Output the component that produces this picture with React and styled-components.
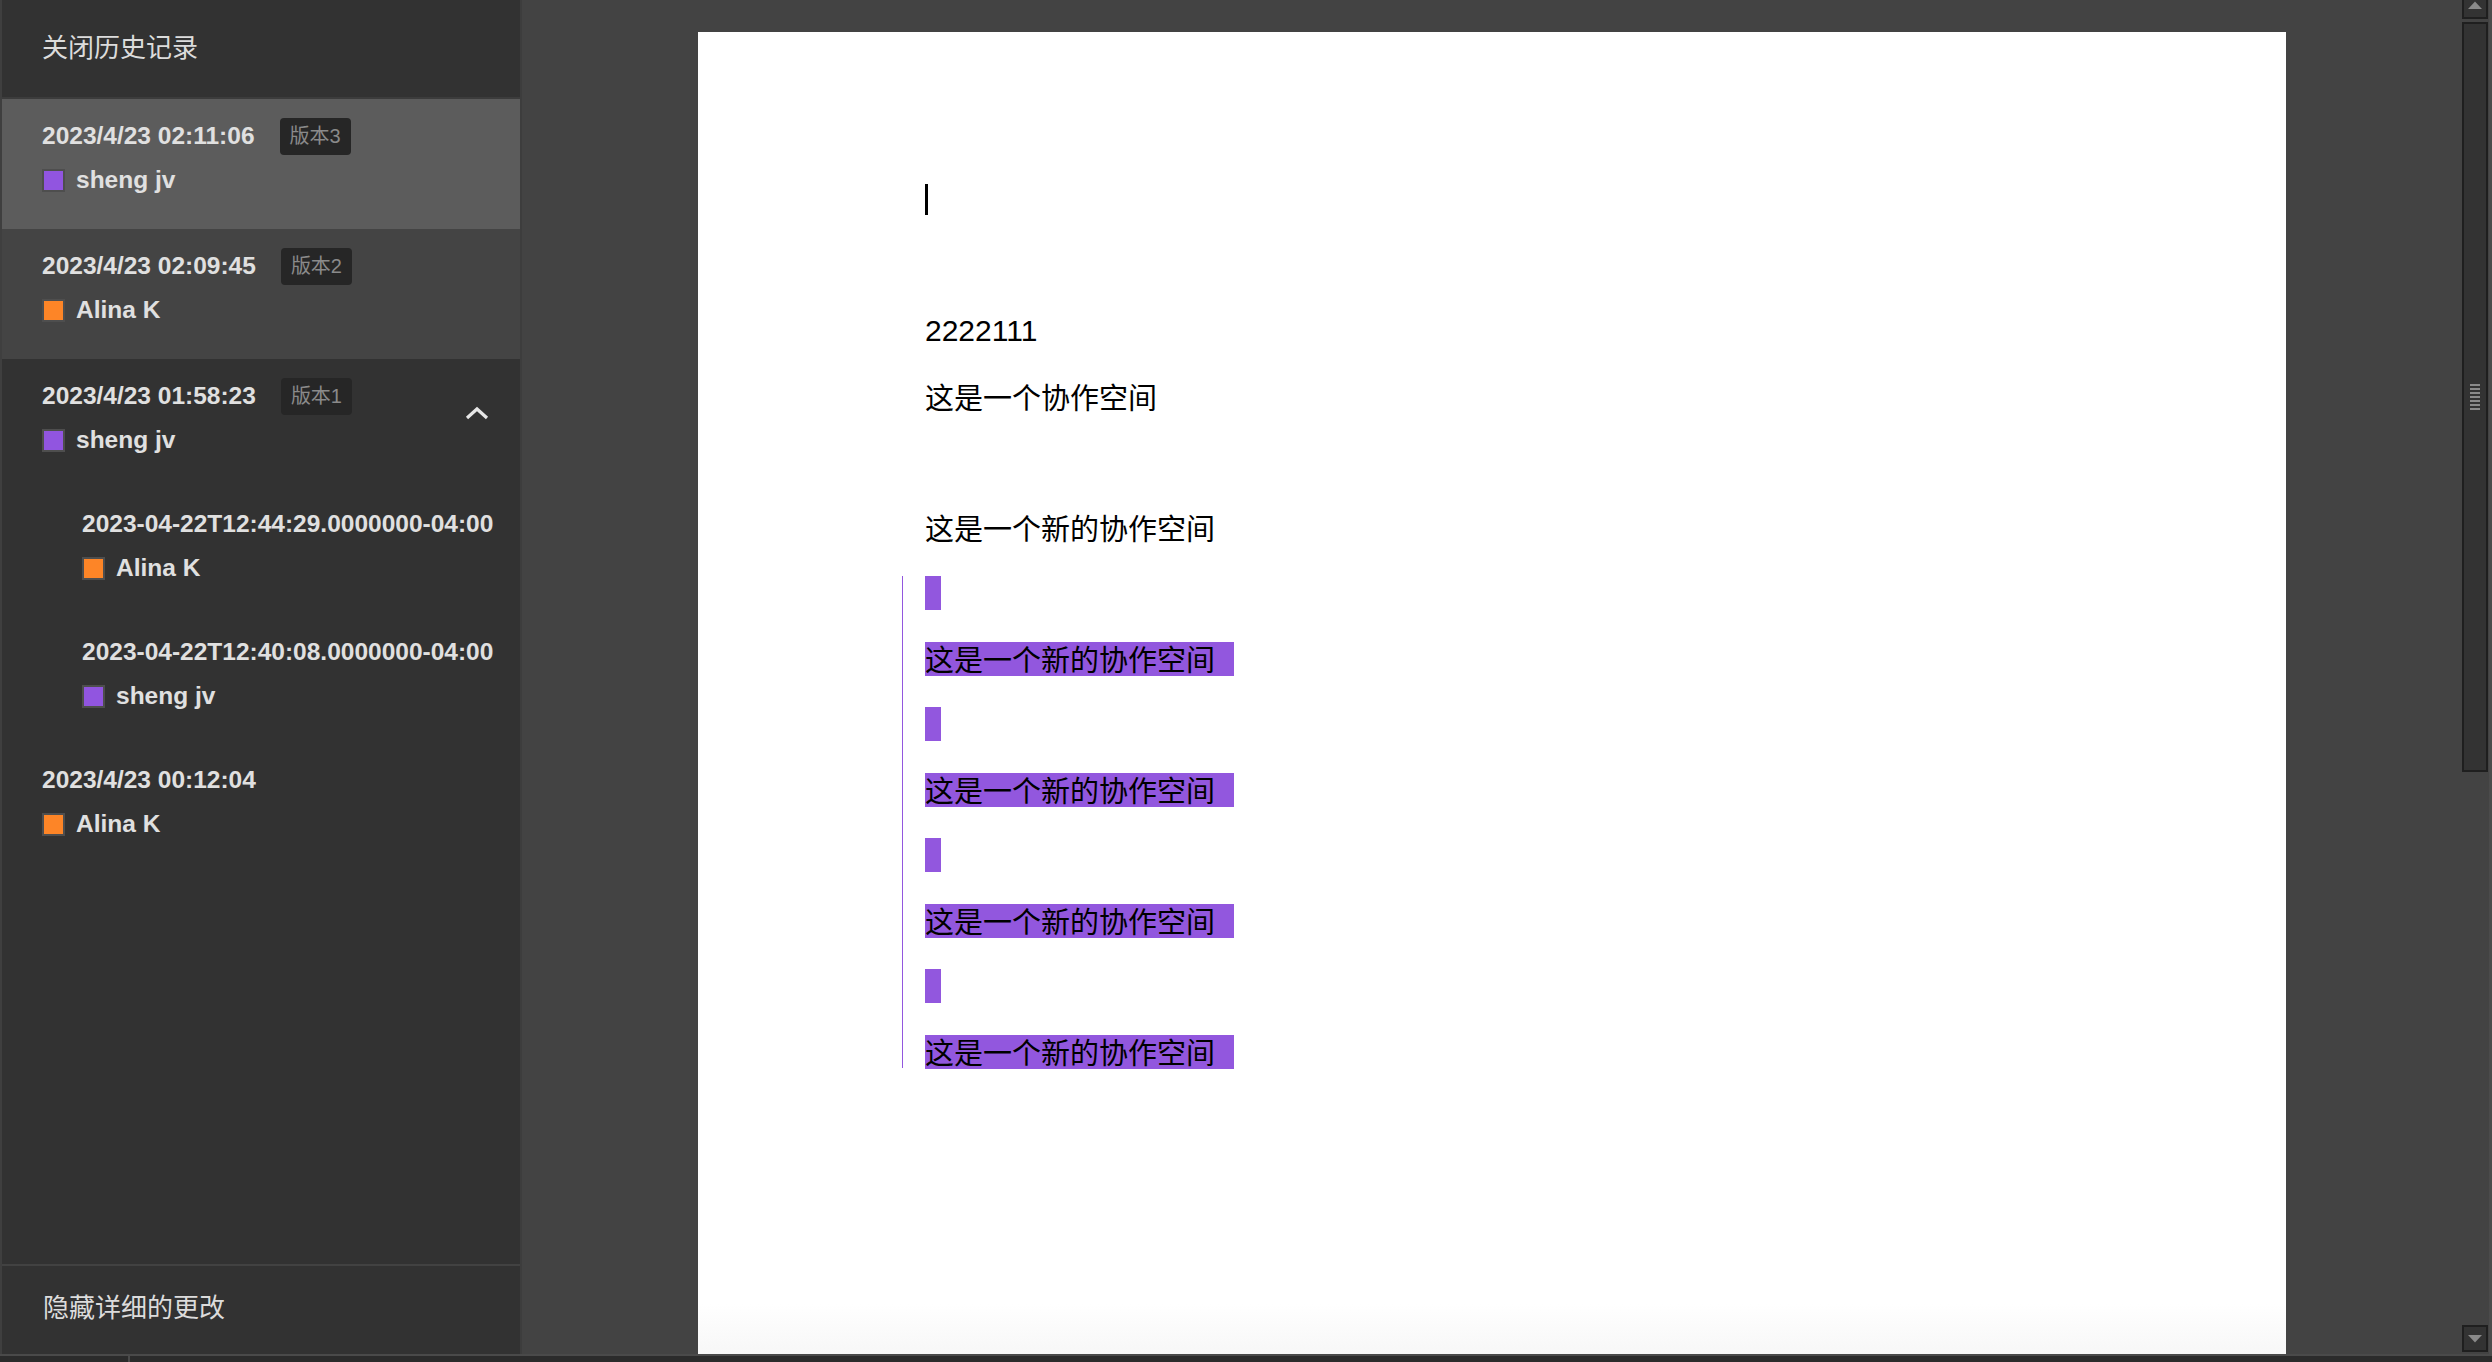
import React from "react";
import styled, { createGlobalStyle } from "styled-components";

const Global = createGlobalStyle`
  html, body { margin: 0; padding: 0; background: #434343; }
  body { font-family: "Liberation Sans", "Noto Sans CJK SC", sans-serif; }
  * { box-sizing: border-box; }
`;

const Screen = styled.div`
  width: 2492px;
  height: 1362px;
  display: flex;
  flex-direction: column;
  overflow: hidden;
  background: #434343;
`;

const Main = styled.div`
  flex: 1;
  display: flex;
  min-height: 0;
`;

const Sidebar = styled.aside`
  width: 522px;
  flex: none;
  display: flex;
  flex-direction: column;
  background: #323232;
  border-left: 2px solid #3f3f3f;
  border-right: 2px solid #3d3d3d;
  color: #dedede;
`;

const Header = styled.div`
  height: 99px;
  flex: none;
  display: flex;
  align-items: center;
  padding: 0 0 7px 40px;
  border-bottom: 2px solid #3c3c3c;
  font-family: "Noto Sans CJK SC", sans-serif;
  font-size: 26px;
  color: #dcdcdc;
`;

const List = styled.div`
  flex: 1;
  display: flex;
  flex-direction: column;
`;

const Item = styled.div`
  display: flex;
  justify-content: space-between;
  align-items: flex-start;
  background: ${(p) => p.$bg || "transparent"};
  padding: 22px 31px ${(p) => (p.$bg ? "34px" : "32px")} ${(p) => (p.$sub ? "80px" : "40px")};
`;

const Info = styled.div`
  display: flex;
  flex-direction: column;
  gap: 14px;
`;

const DateRow = styled.div`
  height: 30px;
  display: flex;
  align-items: center;
  gap: 25px;
`;

const DateText = styled.span`
  font-family: "Liberation Sans", Arial, sans-serif;
  font-weight: 700;
  font-size: 24.5px;
  color: #e0e0e0;
  white-space: nowrap;
`;

const Badge = styled.span`
  height: 37px;
  padding: 0 10px 4px;
  display: inline-flex;
  align-items: center;
  background: #262626;
  border-radius: 4px;
  font-family: "Liberation Sans", "Noto Sans CJK SC", sans-serif;
  font-size: 20px;
  color: #8a8a8a;
`;

const NameRow = styled.div`
  height: 30px;
  display: flex;
  align-items: center;
  gap: 11px;
`;

const Swatch = styled.span`
  width: 23px;
  height: 23px;
  flex: none;
  background: ${(p) => p.$color};
  border: 2px solid #4e4e4e;
`;

const Name = styled.span`
  font-family: "Liberation Sans", Arial, sans-serif;
  font-weight: 700;
  font-size: 24.5px;
  color: #e0e0e0;
`;

const Chevron = styled.svg`
  width: 24px;
  height: 14px;
  margin-top: 25px;
  flex: none;
`;

const Footer = styled.div`
  height: 90px;
  flex: none;
  display: flex;
  align-items: center;
  padding: 0 0 9px 41px;
  border-top: 2px solid #424242;
  font-family: "Noto Sans CJK SC", sans-serif;
  font-size: 26px;
  color: #dcdcdc;
`;

const Canvas = styled.div`
  flex: 1;
  min-width: 0;
  display: flex;
  justify-content: center;
  padding-top: 32px;
  overflow: hidden;
  background: #434343;
`;

const Page = styled.div`
  width: 1588px;
  flex: none;
  padding: 151px 0 0 227px;
  background: linear-gradient(to bottom, #ffffff 0, #ffffff calc(100% - 50px), #f7f7f7 100%);
  color: #000;
`;

const Para = styled.div`
  height: 33px;
  margin-bottom: 32.5px;
  line-height: 33px;
  font-size: ${(p) => (p.$latin ? "30px" : "29px")};
  font-family: ${(p) =>
    p.$latin ? '"Liberation Sans", Arial, sans-serif' : '"Noto Sans CJK SC", sans-serif'};
  white-space: nowrap;
`;

const Caret = styled.span`
  display: inline-block;
  width: 3px;
  height: 31px;
  margin-top: 1px;
  vertical-align: top;
  background: #000;
`;

const Inserted = styled.div`
  margin-left: -23px;
  padding-left: 22px;
  border-left: 1px solid #9257de;
`;

const Mark = styled.span`
  display: inline-block;
  height: 34px;
  line-height: 33px;
  vertical-align: top;
  background: #9257de;
  min-width: 16px;
  padding-right: ${(p) => (p.$empty ? "0" : "19px")};
`;

const ScrollCol = styled.div`
  width: 30px;
  flex: none;
  display: flex;
  flex-direction: column;
  padding-right: 4px;
  border-right: 3px solid #4b4b4b;
  background: #434343;
`;

const ArrowBtn = styled.div`
  width: 26px;
  height: ${(p) => p.$h}px;
  flex: none;
  display: flex;
  align-items: ${(p) => (p.$up ? "flex-start" : "center")};
  justify-content: center;
  padding-top: ${(p) => (p.$up ? "1px" : "0")};
  background: #333;
  border: 2px solid #1f1f1f;
  ${(p) => (p.$up ? "border-top: none;" : "")}
`;

const Thumb = styled.div`
  width: 26px;
  height: 750px;
  margin-top: 3px;
  flex: none;
  display: flex;
  flex-direction: column;
  align-items: center;
  justify-content: center;
  gap: 2px;
  background: #333;
  border: 2px solid #1f1f1f;
`;

const Grip = styled.span`
  width: 10px;
  height: 2px;
  background: #8a8a8a;
`;

const Spacer = styled.div`
  flex: ${(p) => p.$fixed || "1"};
`;

const BottomBar = styled.div`
  height: 8px;
  flex: none;
  display: flex;
  background: #2b2b2b;
  border-top: 2px solid #4a4a4a;
  padding-left: 128px;
`;

const Tick = styled.span`
  width: 2px;
  height: 100%;
  background: #4a4a4a;
`;

const items = [
  { date: "2023/4/23 02:11:06", badge: "版本3", name: "sheng jv", color: "#9155e0", bg: "#5c5c5c" },
  { date: "2023/4/23 02:09:45", badge: "版本2", name: "Alina K", color: "#fd8527", bg: "#444444" },
  { date: "2023/4/23 01:58:23", badge: "版本1", name: "sheng jv", color: "#9155e0", open: true },
  { date: "2023-04-22T12:44:29.0000000-04:00", name: "Alina K", color: "#fd8527", sub: true },
  { date: "2023-04-22T12:40:08.0000000-04:00", name: "sheng jv", color: "#9155e0", sub: true },
  { date: "2023/4/23 00:12:04", name: "Alina K", color: "#fd8527" },
];

const TEXT = "这是一个新的协作空间";

export default function App() {
  return (
    <>
      <Global />
      <Screen>
        <Main>
          <Sidebar>
            <Header>关闭历史记录</Header>
            <List>
              {items.map((it, i) => (
                <Item key={i} $bg={it.bg} $sub={it.sub}>
                  <Info>
                    <DateRow>
                      <DateText>{it.date}</DateText>
                      {it.badge && <Badge>{it.badge}</Badge>}
                    </DateRow>
                    <NameRow>
                      <Swatch $color={it.color} />
                      <Name>{it.name}</Name>
                    </NameRow>
                  </Info>
                  {it.open && (
                    <Chevron viewBox="0 0 24 14">
                      <polyline
                        points="2,12 12,3 22,12"
                        fill="none"
                        stroke="#e6e6e6"
                        strokeWidth="3.2"
                      />
                    </Chevron>
                  )}
                </Item>
              ))}
            </List>
            <Footer>隐藏详细的更改</Footer>
          </Sidebar>

          <Canvas>
            <Page>
              <Para>
                <Caret />
              </Para>
              <Para />
              <Para $latin>2222111</Para>
              <Para>这是一个协作空间</Para>
              <Para />
              <Para>{TEXT}</Para>
              <Inserted>
                {[0, 1, 2, 3].map((k) => (
                  <React.Fragment key={k}>
                    <Para>
                      <Mark $empty />
                    </Para>
                    <Para>
                      <Mark>{TEXT}</Mark>
                    </Para>
                  </React.Fragment>
                ))}
              </Inserted>
            </Page>
          </Canvas>

          <ScrollCol>
            <ArrowBtn $up $h={19}>
              <svg width="14" height="8" viewBox="0 0 14 8">
                <polygon points="0,8 7,0.5 14,8" fill="#8a8a8a" />
              </svg>
            </ArrowBtn>
            <Thumb>
              {Array.from({ length: 7 }).map((_, k) => (
                <Grip key={k} />
              ))}
            </Thumb>
            <Spacer />
            <ArrowBtn $h={27}>
              <svg width="14" height="8" viewBox="0 0 14 8">
                <polygon points="0,0 14,0 7,7.5" fill="#8a8a8a" />
              </svg>
            </ArrowBtn>
            <Spacer $fixed="0 0 2px" />
          </ScrollCol>
        </Main>
        <BottomBar>
          <Tick />
        </BottomBar>
      </Screen>
    </>
  );
}
